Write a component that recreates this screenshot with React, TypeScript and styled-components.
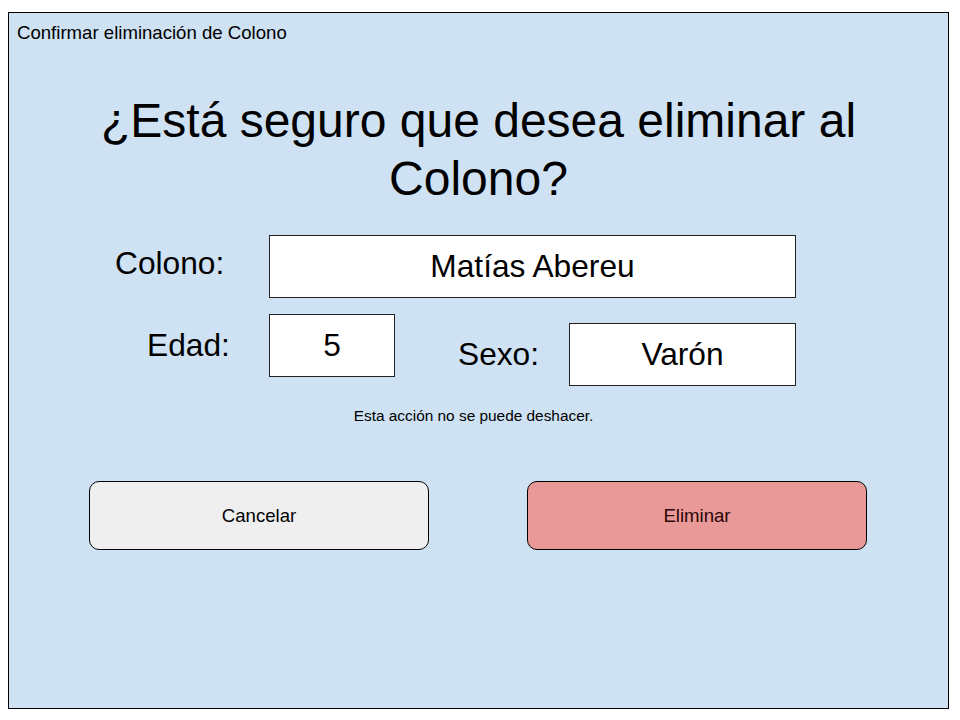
import styled, { createGlobalStyle } from 'styled-components'

const GlobalStyle = createGlobalStyle`
  html, body {
    margin: 0;
    padding: 0;
    background: #ffffff;
  }
  body {
    font-family: "Liberation Sans", Arial, sans-serif;
    color: #000000;
  }
`

const Frame = styled.div`
  box-sizing: border-box;
  width: 941px;
  height: 697px;
  margin: 12px 0 0 8px;
  border: 1px solid #000000;
  background-color: #cfe2f3;
  display: flex;
  flex-direction: column;
`

const WindowTitle = styled.div`
  padding: 9px 0 0 8px;
  font-size: 18.6px;
  line-height: 21px;
`

const Heading = styled.h1`
  max-width: 800px;
  margin: 49px auto 0;
  font-size: 48px;
  line-height: 58px;
  font-weight: normal;
  text-align: center;
`

const Fields = styled.div`
  display: flex;
  flex-direction: column;
  padding-left: 106px;
  margin-top: 27px;
`

const Row = styled.div<{ top: number }>`
  display: flex;
  align-items: flex-start;
  margin-top: ${props => props.top}px;
`

const Group = styled.div<{ left: number, drop: number }>`
  display: flex;
  align-items: center;
  margin-left: ${props => props.left}px;
  margin-top: ${props => props.drop}px;
`

const Label = styled.div<{ width: number, indent?: number, lift?: number }>`
  box-sizing: border-box;
  width: ${props => props.width}px;
  height: 63px;
  padding-left: ${props => props.indent || 0}px;
  padding-bottom: ${props => props.lift || 0}px;
  display: flex;
  align-items: center;
  font-size: 31.7px;
`

const ValueBox = styled.div<{ width: number }>`
  box-sizing: border-box;
  width: ${props => props.width}px;
  height: 63px;
  border: 1px solid #222222;
  background-color: #ffffff;
  display: flex;
  align-items: center;
  justify-content: center;
  font-size: 31.7px;
`

const Note = styled.div`
  margin-top: 21px;
  padding-right: 10px;
  text-align: center;
  font-size: 15.4px;
  line-height: 17px;
`

const Actions = styled.div`
  display: flex;
  gap: 98px;
  padding-left: 80px;
  margin-top: 57px;
`

const ActionButton = styled.button<{ tone: string, ink: string }>`
  box-sizing: border-box;
  width: 340px;
  height: 69px;
  border: 1px solid #000000;
  border-radius: 10px;
  background-color: ${props => props.tone};
  color: ${props => props.ink};
  font-family: "Liberation Sans", Arial, sans-serif;
  font-size: 18.6px;
  padding-top: 2px;
  cursor: pointer;
`

export default function App() {
  return <>
    <GlobalStyle />
    <Frame>
      <WindowTitle>Confirmar eliminación de Colono</WindowTitle>
      <Heading>¿Está seguro que desea eliminar al Colono?</Heading>
      <Fields>
        <Row top={0}>
          <Label width={154} lift={6}>Colono:</Label>
          <ValueBox width={527}>Matías Abereu</ValueBox>
        </Row>
        <Row top={16}>
          <Label width={154} indent={32}>Edad:</Label>
          <ValueBox width={126}>5</ValueBox>
          <Group left={63} drop={9}>
            <Label width={111}>Sexo:</Label>
            <ValueBox width={227}>Varón</ValueBox>
          </Group>
        </Row>
      </Fields>
      <Note>Esta acción no se puede deshacer.</Note>
      <Actions>
        <ActionButton tone='#efefef' ink='#000000'>Cancelar</ActionButton>
        <ActionButton tone='#ea9999' ink='#2a0606'>Eliminar</ActionButton>
      </Actions>
    </Frame>
  </>
}
